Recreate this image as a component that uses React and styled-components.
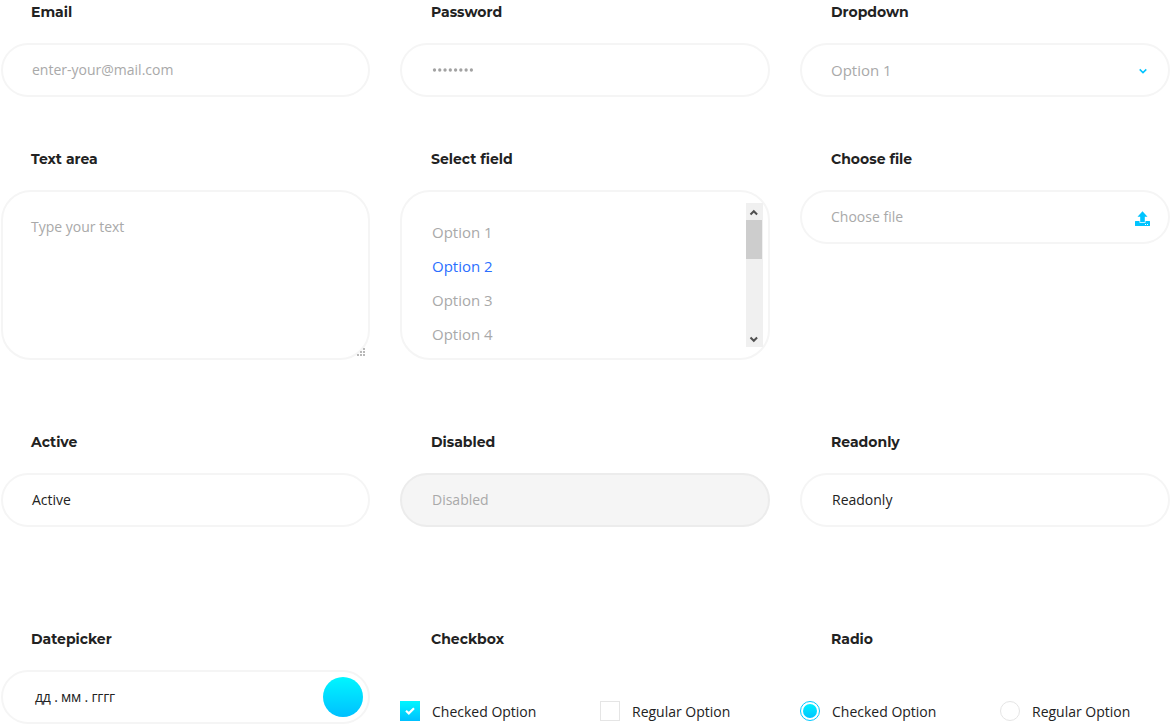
import React from 'react';
import styled, { createGlobalStyle, css } from 'styled-components';

const GlobalStyle = createGlobalStyle`
  *, *::before, *::after { box-sizing: border-box; }
  html, body { margin: 0; padding: 0; background: #fff; }
  body {
    color: #222;
    font-family: 'Open Sans', 'Noto Sans', sans-serif;
    font-size: 14px;
    overflow: hidden;
  }
`;

const Form = styled.main`
  display: flex;
  flex-direction: column;
  width: 1170px;
  height: 724px;
  overflow: hidden;
`;

const Row = styled.section`
  display: grid;
  grid-template-columns: repeat(3, 370px);
  column-gap: 30px;
  height: ${(p) => p.$height}px;
  flex: none;
`;

const Field = styled.div`
  display: flex;
  flex-direction: column;
  padding-left: ${(p) => (p.$first ? 1 : 0)}px;
`;

const Label = styled.h6`
  margin: 0;
  height: 43px;
  padding-left: ${(p) => (p.$first ? 30 : 31)}px;
  font-family: Montserrat, Inter, sans-serif;
  font-size: 14px;
  font-weight: 700;
  line-height: 24px;
  white-space: nowrap;
`;

const Pill = styled.div`
  display: flex;
  align-items: center;
  justify-content: space-between;
  height: 54px;
  padding: 0 ${(p) => p.$right ?? 18}px 0 ${(p) => p.$left ?? 30}px;
  border: 2px solid #f5f5f5;
  border-radius: 27px;
  line-height: 20px;
  color: ${(p) => (p.$muted ? '#a9a9a9' : '#222')};
  ${(p) => p.$disabled && css`
    background: #f5f5f5;
    border-color: #ececec;
  `}
`;

const Value = styled.span`
  font-size: ${(p) => p.$size || 14}px;
  letter-spacing: ${(p) => p.$spacing || 0}px;
  white-space: pre;
`;

const Mask = styled.svg`
  margin-bottom: 1px;
`;

const Chevron = styled.svg`
  margin-top: 2px;
`;

const TextArea = styled.div`
  display: flex;
  justify-content: space-between;
  height: 170px;
  padding: 25px 3px 0 28px;
  border: 2px solid #f5f5f5;
  border-radius: 30px;
  color: #a9a9a9;
  line-height: 20px;
`;

const Grip = styled.svg`
  align-self: flex-end;
  margin-bottom: 1px;
`;

const ListBox = styled.div`
  display: flex;
  justify-content: space-between;
  height: 170px;
  padding: 11px 5px 11px 30px;
  border: 2px solid #f5f5f5;
  border-radius: 30px;
`;

const Options = styled.ul`
  margin: 0;
  padding: 12px 0 0;
  list-style: none;
`;

const Option = styled.li`
  height: 34px;
  font-size: 15px;
  line-height: 34px;
  color: ${(p) => (p.$selected ? '#2b6fff' : '#a9a9a9')};
`;

const ScrollTrack = styled.div`
  display: flex;
  flex-direction: column;
  width: 17px;
  height: 144px;
  background: #f0f0f0;
`;

const ScrollThumb = styled.div`
  width: 16px;
  height: 39px;
  background: #cdcdcd;
`;

const ScrollButton = styled.svg`
  display: block;
  margin-top: ${(p) => (p.$end ? 'auto' : 0)};
`;

const DateButton = styled.span`
  width: 40px;
  height: 40px;
  border-radius: 50%;
  background: linear-gradient(#00f6ff, #00c0ff);
`;

const Choices = styled.div`
  display: grid;
  grid-template-columns: 200px 170px;
  padding-top: 31px;
`;

const Choice = styled.div`
  display: flex;
  align-items: center;
  gap: 12px;
  height: 20px;
  white-space: nowrap;
`;

const Box = styled.span`
  display: flex;
  align-items: center;
  justify-content: center;
  width: 20px;
  height: 20px;
  border: ${(p) => (p.$checked ? '0' : '1px solid #e5e5e5')};
  background: ${(p) => (p.$checked ? 'linear-gradient(#00f6ff, #00c0ff)' : '#fff')};
`;

const Ring = styled.span`
  display: flex;
  align-items: center;
  justify-content: center;
  width: 20px;
  height: 20px;
  border-radius: 50%;
  border: 1px solid ${(p) => (p.$checked ? '#00c8ff' : '#e5e5e5')};
`;

const Bullet = styled.span`
  width: 14px;
  height: 14px;
  border-radius: 50%;
  background: linear-gradient(#00f0ff, #00c4ff);
`;

const ChoiceText = styled.span`
  line-height: 20px;
  padding-top: 2px;
`;

const OPTIONS = ['Option 1', 'Option 2', 'Option 3', 'Option 4'];
const GRIP_DOTS = [[6, 0], [3, 3], [6, 3], [0, 6], [3, 6], [6, 6]];

export default function App() {
  return (
    <>
      <GlobalStyle />
      <Form>
        <Row $height={147}>
          <Field $first>
            <Label $first>Email</Label>
            <Pill $muted $left={29}><Value>enter-your@mail.com</Value></Pill>
          </Field>
          <Field>
            <Label>Password</Label>
            <Pill $muted>
              <Mask width="42" height="4" viewBox="0 0 42 4" fill="#a2a2a2">
                {Array.from({ length: 8 }, (_, i) => (
                  <circle key={i} cx={2.5 + i * 5.27} cy="2" r="1.65" />
                ))}
              </Mask>
            </Pill>
          </Field>
          <Field>
            <Label>Dropdown</Label>
            <Pill $muted $left={29} $right={21}>
              <Value $size={15}>Option 1</Value>
              <Chevron width="8" height="6" viewBox="0 0 8 6" fill="none" stroke="#00c4ff" strokeWidth="1.5">
                <path d="M0.7 1.4 4 4.6 7.3 1.4" />
              </Chevron>
            </Pill>
          </Field>
        </Row>

        <Row $height={283}>
          <Field $first>
            <Label $first>Text area</Label>
            <TextArea>
              <Value>Type your text</Value>
              <Grip width="8" height="9" viewBox="0 0 8 9" fill="#b8b8b8">
                {GRIP_DOTS.map(([x, y]) => (
                  <rect key={`${x}-${y}`} x={x} y={y} width="2" height="2" />
                ))}
              </Grip>
            </TextArea>
          </Field>
          <Field>
            <Label>Select field</Label>
            <ListBox>
              <Options>
                {OPTIONS.map((name) => (
                  <Option key={name} $selected={name === 'Option 2'}>{name}</Option>
                ))}
              </Options>
              <ScrollTrack>
                <ScrollButton width="16" height="17" viewBox="0 0 16 17" fill="none" stroke="#505050" strokeWidth="2">
                  <path d="M4.5 11.5 7.8 8.2 11.1 11.5" />
                </ScrollButton>
                <ScrollThumb />
                <ScrollButton $end width="16" height="17" viewBox="0 0 16 17" fill="none" stroke="#505050" strokeWidth="2">
                  <path d="M4.5 7.5 7.8 10.8 11.1 7.5" />
                </ScrollButton>
              </ScrollTrack>
            </ListBox>
          </Field>
          <Field>
            <Label>Choose file</Label>
            <Pill $muted $left={29} $right={18}>
              <Value>Choose file</Value>
              <svg width="15" height="18" viewBox="0 0 15 18" fill="#00c4ff">
                <path d="M7.5 3.3 12.5 8.8H9.8V13.9H5.2V8.8H2.5Z" />
                <path fillRule="evenodd" d="M0.5 13H4.5V14.7H10.5V13H14.5Q15 13 15 13.5V17.5Q15 18 14.5 18H0.5Q0 18 0 17.5V13.5Q0 13 0.5 13ZM10 16V17H11V16ZM12 16V17H13V16Z" />
              </svg>
            </Pill>
          </Field>
        </Row>

        <Row $height={197}>
          <Field $first>
            <Label $first>Active</Label>
            <Pill $left={29}><Value>Active</Value></Pill>
          </Field>
          <Field>
            <Label>Disabled</Label>
            <Pill $muted $disabled><Value>Disabled</Value></Pill>
          </Field>
          <Field>
            <Label>Readonly</Label>
            <Pill><Value>Readonly</Value></Pill>
          </Field>
        </Row>

        <Row $height={97}>
          <Field $first>
            <Label $first>Datepicker</Label>
            <Pill $left={32} $right={5}>
              <Value $spacing={-0.2}>дд . мм . гггг</Value>
              <DateButton />
            </Pill>
          </Field>
          <Field>
            <Label>Checkbox</Label>
            <Choices>
              <Choice>
                <Box $checked>
                  <svg width="10" height="8" viewBox="0 0 10 8" fill="none" stroke="#fff" strokeWidth="2.2">
                    <path d="M1 3.8 3.8 6.4 9 1.2" />
                  </svg>
                </Box>
                <ChoiceText>Checked Option</ChoiceText>
              </Choice>
              <Choice>
                <Box />
                <ChoiceText>Regular Option</ChoiceText>
              </Choice>
            </Choices>
          </Field>
          <Field>
            <Label>Radio</Label>
            <Choices>
              <Choice>
                <Ring $checked><Bullet /></Ring>
                <ChoiceText>Checked Option</ChoiceText>
              </Choice>
              <Choice>
                <Ring />
                <ChoiceText>Regular Option</ChoiceText>
              </Choice>
            </Choices>
          </Field>
        </Row>
      </Form>
    </>
  );
}
